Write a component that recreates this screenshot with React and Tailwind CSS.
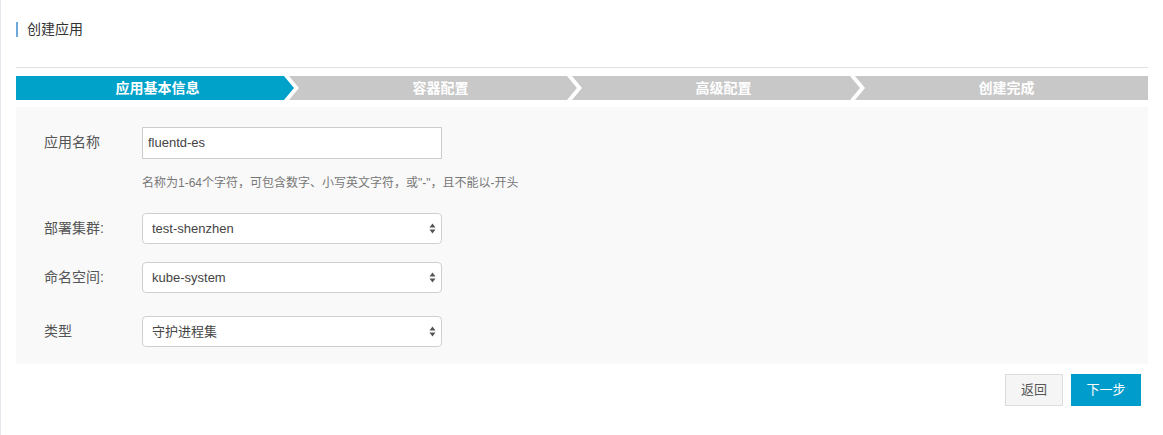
import React from 'react';

const font = { fontFamily: '"Liberation Sans", "Noto Sans CJK SC", sans-serif' };

const steps = [
  { label: '应用基本信息', active: true },
  { label: '容器配置' },
  { label: '高级配置' },
  { label: '创建完成' },
];

// clip shapes for the step bar, written out in full
const stepClass = [
  'w-[278px] pl-[5px] [clip-path:polygon(0_0,calc(100%_-_10px)_0,100%_50%,calc(100%_-_10px)_100%,0_100%)]',
  'w-[288px] -ml-[5px] pl-[15px] [clip-path:polygon(0_0,calc(100%_-_10px)_0,100%_50%,calc(100%_-_10px)_100%,0_100%,10px_50%)]',
  'w-[288px] -ml-[5px] pl-[15px] [clip-path:polygon(0_0,calc(100%_-_10px)_0,100%_50%,calc(100%_-_10px)_100%,0_100%,10px_50%)]',
  'flex-1 -ml-[5px] pl-[10px] [clip-path:polygon(0_0,100%_0,100%_100%,0_100%,10px_50%)]',
];

const SelectArrows = () => (
  <svg width="7" height="11" viewBox="0 0 7 11" className="shrink-0">
    <path d="M3.5 0.5 L6.5 4.5 L0.5 4.5 Z" fill="#555" />
    <path d="M3.5 10.5 L6.5 6.5 L0.5 6.5 Z" fill="#555" />
  </svg>
);

const FakeSelect = ({ value }) => (
  <div className="w-[300px] h-[31px] bg-white border border-[#cfcfcf] rounded-[4px] flex items-center justify-between pl-[9px] pr-[5px] text-[13px] text-[#444]">
    <span>{value}</span>
    <SelectArrows />
  </div>
);

const Row = ({ label, children, className = '' }) => (
  <div className={`flex items-start ${className}`}>
    <div className="w-[98px] pt-[5px] text-[14px] text-[#555] leading-[20px]">{label}</div>
    {children}
  </div>
);

export default function App() {
  return (
    <div className="min-h-[435px] bg-white border-l border-[#e4e7eb] pl-[15px] pr-[15px] pt-[22px]" style={font}>
      {/* 标题 */}
      <div className="flex items-center h-[15px]">
        <span className="border-l-2 border-[#6fa9da] h-[15px]"></span>
        <span className="ml-[9px] text-[14px] text-[#333] leading-[15px]">创建应用</span>
      </div>

      <div className="mt-[30px] h-px bg-[#e1e1e1]"></div>

      {/* 步骤条 */}
      <div className="mt-[8px] flex h-[24px]">
        {steps.map((s, i) => (
          <div
            key={s.label}
            className={`h-full flex items-center justify-center text-white font-bold text-[14px] ${stepClass[i]} ${s.active ? 'bg-[#00a2ca]' : 'bg-[#c8c8c8]'}`}
          >
            {s.label}
          </div>
        ))}
      </div>

      {/* 表单 */}
      <div className="mt-[7px] bg-[#f9f9f9] pl-[28px] pt-[20px] pb-[17px]">
        <Row label="应用名称">
          <div>
            <div className="w-[300px] h-[32px] bg-white border border-[#cccccc] flex items-center pl-[5px] text-[13px] text-[#444]">
              fluentd-es
            </div>
            <div className="mt-[16px] text-[12px] text-[#777] leading-[16px]">
              名称为1-64个字符，可包含数字、小写英文字符，或"-"，且不能以-开头
            </div>
          </div>
        </Row>
        <Row label="部署集群:" className="mt-[22px]">
          <FakeSelect value="test-shenzhen" />
        </Row>
        <Row label="命名空间:" className="mt-[18px]">
          <FakeSelect value="kube-system" />
        </Row>
        <Row label="类型" className="mt-[23px]">
          <FakeSelect value="守护进程集" />
        </Row>
      </div>

      {/* 按钮 */}
      <div className="mt-[10px] flex justify-end pr-[7px] gap-[8px]">
        <button className="w-[58px] h-[32px] bg-[#f5f5f5] border border-[#dcdcdc] text-[13px] text-[#555]">
          返回
        </button>
        <button className="w-[70px] h-[32px] bg-[#009ccc] text-[13px] text-white">
          下一步
        </button>
      </div>
    </div>
  );
}
